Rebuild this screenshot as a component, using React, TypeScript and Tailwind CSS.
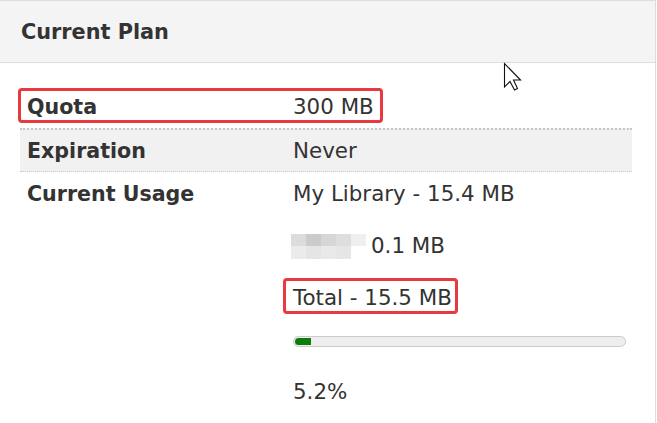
import React from "react";

function Cursor() {
  return (
    <svg
      className="absolute left-[503px] top-[62px]"
      width="19"
      height="29"
      viewBox="-1 -1 19 29"
    >
      <path
        d="M0.5 0.5 L0.5 24 L6 18.5 L10.5 27 L13.5 25.5 L9.5 17 L16.5 17 Z"
        fill="#ffffff"
        stroke="#111111"
        strokeWidth="1.1"
        strokeLinejoin="miter"
      />
    </svg>
  );
}

function Pixelated() {
  const top = ["#dcdcdc", "#cbcbcb", "#d6d6d6", "#dedede", "#efefef"];
  const bottom = ["#ebebeb", "#e5e5e5", "#e9e9e9", "#e6e6e6", "#ffffff"];
  return (
    <span className="inline-flex flex-col ml-[-2px] mr-[5px] align-middle">
      <span className="flex">
        {top.map((c, i) => (
          <span key={i} className="block w-[15px] h-[12px]" style={{ background: c }} />
        ))}
      </span>
      <span className="flex">
        {bottom.map((c, i) => (
          <span key={i} className="block w-[15px] h-[13px]" style={{ background: c }} />
        ))}
      </span>
    </span>
  );
}

export default function App() {
  return (
    <div className="relative w-[657px] h-[423px] overflow-hidden bg-white text-[#333333] font-['DejaVu_Sans',sans-serif] text-[21.4px]">
      <div className="w-[656px] h-[423px] border-t border-r border-[#dddddd]">
        <div className="h-[62px] bg-[#f4f4f4] border-b border-[#dddddd] pl-[21px] pt-[2px] flex items-center">
          <span className="font-bold text-[20.8px]">Current Plan</span>
        </div>
        <div className="pl-[20px] pt-[21px]">
          <div className="w-[612px]">
            {/* Quota */}
            <div className="relative flex items-center h-[44px] pt-[3px]">
              <div className="w-[266px] pl-[7px] font-bold text-[20.6px]">Quota</div>
              <div className="pl-[7px]">300 MB</div>
              <div className="absolute left-[-2px] top-[4px] w-[365px] h-[35px] border-[3px] border-[#e8393e] rounded-[4px]" />
            </div>
            {/* Expiration */}
            <div className="flex items-center h-[44px] pt-[1px] bg-[#f1f1f1] border-t-2 border-b border-dotted border-[#c8c8c8]">
              <div className="w-[266px] pl-[7px] font-bold text-[20.6px]">Expiration</div>
              <div className="pl-[7px]">Never</div>
            </div>
            {/* Current Usage */}
            <div className="flex pt-[7px] leading-[30px]">
              <div className="w-[266px] pl-[7px] font-bold text-[20.6px]">Current Usage</div>
              <div className="pl-[7px] flex flex-col">
                <div className="h-[30px]">My Library - 15.4 MB</div>
                <div className="h-[30px] mt-[22px] flex items-center">
                  <Pixelated />
                  <span>0.1 MB</span>
                </div>
                <div className="relative h-[30px] mt-[22px] w-fit">
                  <span>Total - 15.5 MB</span>
                  <div className="absolute left-[-10px] right-[-6px] top-[-5px] h-[36px] border-[3px] border-[#e8393e] rounded-[4px]" />
                </div>
                <div className="mt-[23px] w-[333px] h-[11px] rounded-full border border-[#cccccc] bg-[#eeeeee] p-[1px]">
                  <div className="h-full w-[16px] bg-[#0b7d0b] rounded-l-full" />
                </div>
                <div className="h-[30px] mt-[30px]">5.2%</div>
              </div>
            </div>
          </div>
        </div>
      </div>
      <Cursor />
    </div>
  );
}
